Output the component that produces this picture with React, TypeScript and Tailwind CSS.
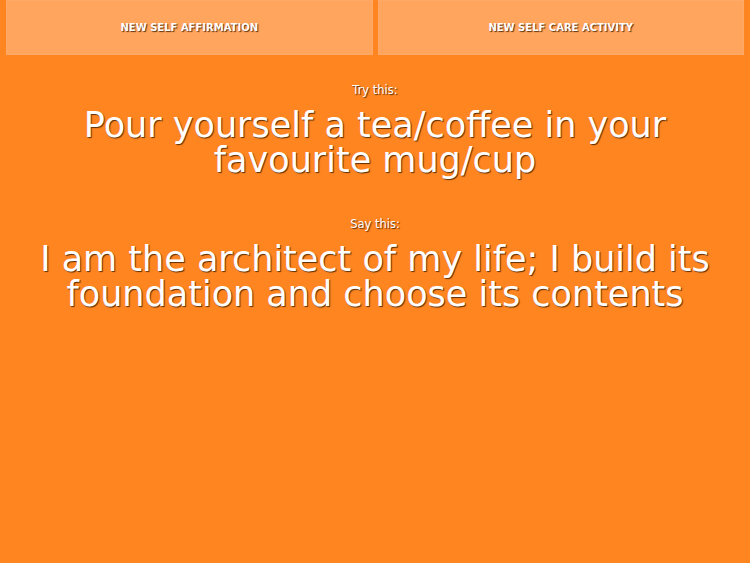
export default function App() {
  const shadow = "[text-shadow:1px_1px_1px_rgba(60,30,0,0.85)]";
  return (
    <div className="min-h-[563px] w-full bg-[#ff8521] text-white font-['DejaVu_Sans',sans-serif]">
      <div className="grid grid-cols-2 gap-[5px] px-[6px]">
        <button className={`h-[55px] bg-[#ffa55e] border border-[#ffa968] text-[10px] font-bold uppercase text-white ${shadow}`}>
          New Self Affirmation
        </button>
        <button className={`h-[55px] bg-[#ffa55e] border border-[#ffa968] text-[10px] font-bold uppercase text-white ${shadow}`}>
          New Self Care Activity
        </button>
      </div>
      <div className="text-center px-4">
        <div className="pt-[29px]">
          <div className={`text-[11.5px] leading-[13px] mb-[11px] ${shadow}`}>Try this:</div>
          <div className={`text-[35px] leading-[35px] mb-[11px] ${shadow}`}>
            Pour yourself a tea/coffee in your favourite mug/cup
          </div>
        </div>
        <div className="pt-[29px]">
          <div className={`text-[11.5px] leading-[13px] mb-[11px] ${shadow}`}>Say this:</div>
          <div className={`text-[35px] leading-[35px] mb-[11px] ${shadow}`}>
            I am the architect of my life; I build its foundation and choose its contents
          </div>
        </div>
      </div>
    </div>
  );
}
